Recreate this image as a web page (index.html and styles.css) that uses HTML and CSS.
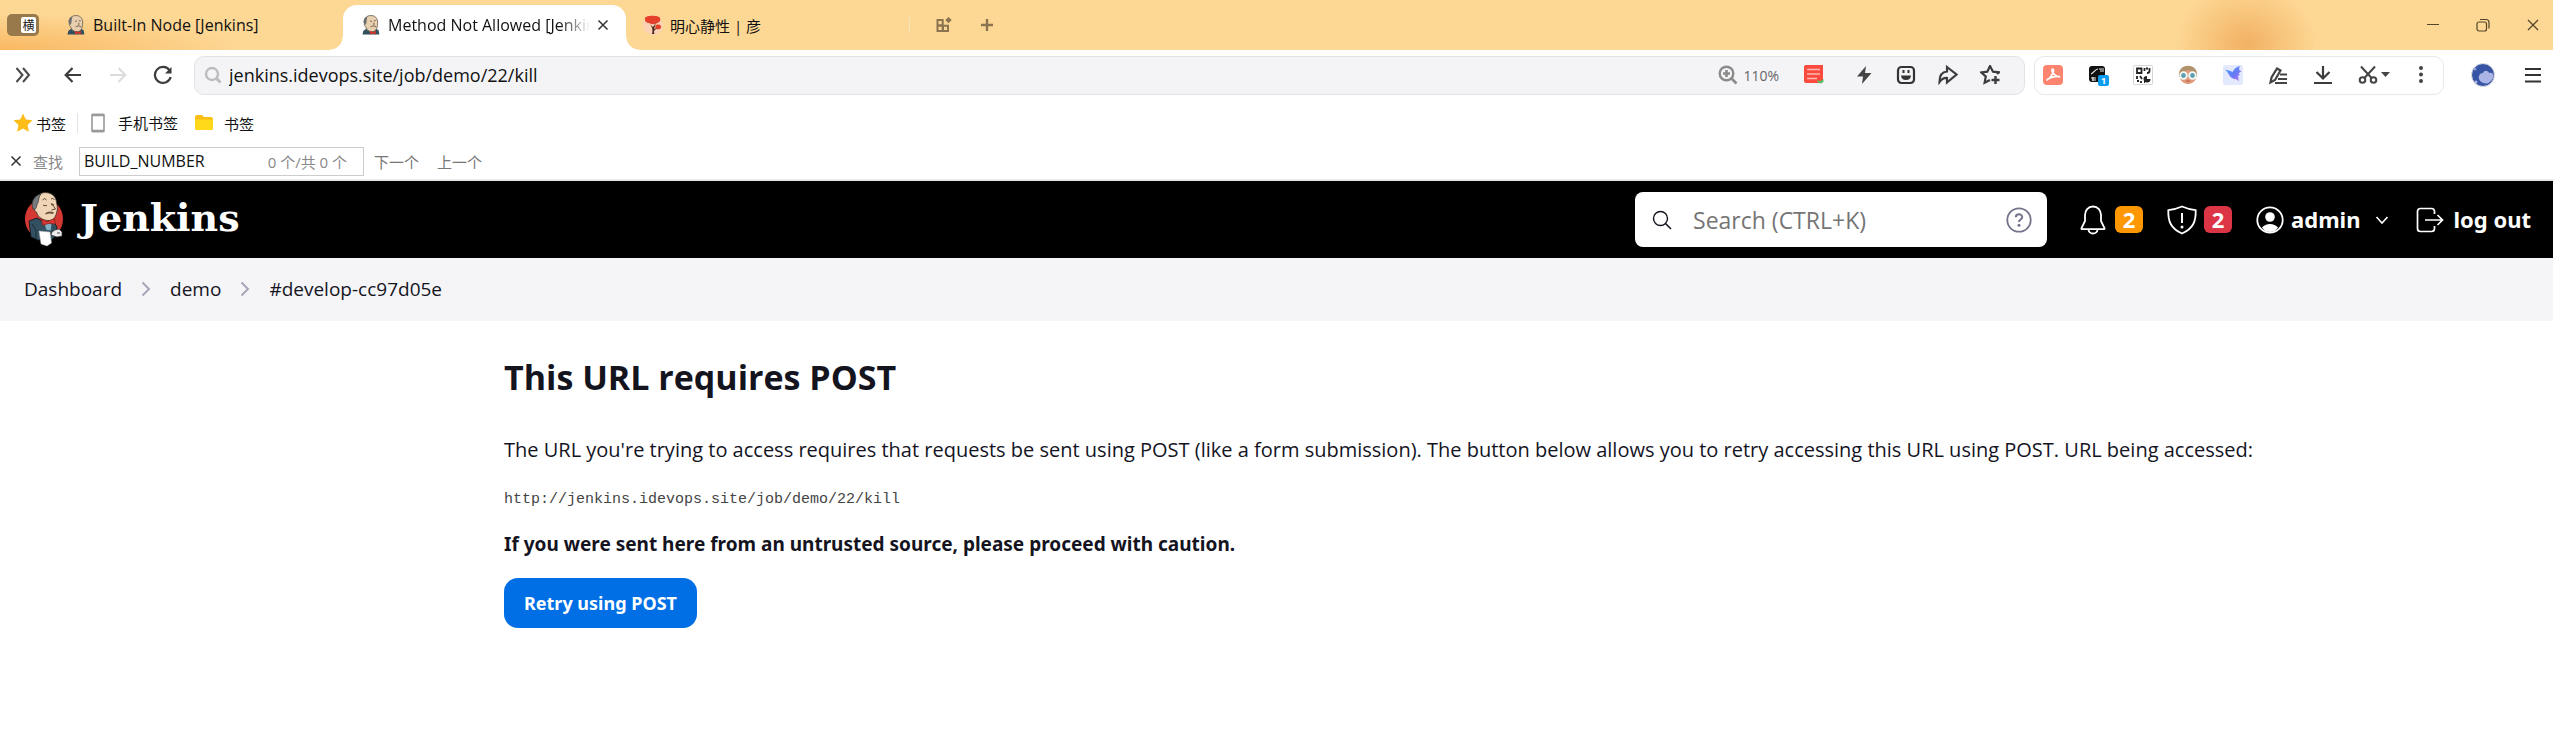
FILE: index.html
```html
<!DOCTYPE html>
<html lang="zh-CN">
<head>
<meta charset="utf-8">
<title>Method Not Allowed [Jenkins]</title>
<link rel="stylesheet" href="styles.css">
</head>
<body>
<svg class="defs" aria-hidden="true">
  <symbol id="butler" viewBox="0 0 20 21">
    <path d="M1 20.500l1-4 5-3.500h6l5 3 .8 4.500z" fill="#33505f"/>
    <path d="M3 9C2 4 5 1 9 .6c5-.4 8 2.400 8 7.400 0 4-1 9-5 9.500-4 .4-7-2-7.500-5C3.500 12 2.800 10.500 3 9z" fill="#e8d0ae" stroke="#5d554d" stroke-width=".8"/>
    <path d="M2.400 8C1.800 4.500 4 2 6.500 1.500 5 4 5.800 6.500 5 9l-1 1.500z" fill="#6b6e70"/>
    <path d="M9 6.500h2M13 6h2M9.500 12.500c2-1.500 4-1 6 0M13 8v3" fill="none" stroke="#6d5646" stroke-width=".9"/>
    <path d="M9 16.500l3 1.500 3-1.500v4l-3-1-3 1z" fill="#d8342b"/>
  </symbol>
</svg>

<div class="tabstrip">
  <button class="mode" aria-label="横"><span>横</span></button>
  <div class="tab tab-first">
    <svg class="i20"><use href="#butler"/></svg>
    <span class="tab-title">Built-In Node [Jenkins]</span>
  </div>
  <div class="tab tab-active">
    <svg class="i20"><use href="#butler"/></svg>
    <span class="tab-title fade">Method Not Allowed [Jenkins]</span>
    <button class="bare" aria-label="关闭标签"><svg class="i12" viewBox="0 0 12 12"><path d="M1.500 1.500l9 9M10.500 1.500l-9 9" stroke="#333" stroke-width="1.500"/></svg></button>
  </div>
  <div class="tab tab-third">
    <svg class="i20" viewBox="0 0 20 20"><circle cx="10" cy="10" r="10" fill="#fbd3b4"/><path d="M2 3c1-3 14-3 15 0 1 3-1 5-4 5.500-3 1.500-6 0-7.500-.5C3 8 1.500 5.500 2 3zM12.500 11c1-2 5-2 5.500.5s-2 3-4 2.700-2-2-1.500-3.200z" fill="#e5402b"/><path d="M9 19c1-3 .5-7-2-10l3 3 3-4-2 6 3-1-3 3 .3 3z" fill="#4b2a20"/></svg>
    <span class="tab-title">明心静性 | 彦</span>
  </div>
  <div class="newtab">
    <button class="bare" aria-label="标签组"><svg class="i16" viewBox="0 0 16 16"><path d="M1.500 3h5.200v5.200H1.500zM1.500 8.700h5.200v5.300H1.500zM7 8.700h5V14H7z" fill="none" stroke="#8a7550" stroke-width="2"/><path d="M12.500 0l3.200 3-3.200 3.200-3.200-3.200z" fill="#8a7550"/></svg></button>
    <button class="bare" aria-label="新标签页"><svg class="i16" viewBox="0 0 16 16"><path d="M8 2v12M2 8h12" stroke="#8a7550" stroke-width="2.400"/></svg></button>
  </div>
  <div class="winctl">
    <button class="bare" aria-label="最小化"><svg class="i14" viewBox="0 0 14 14"><path d="M1 6.500h12" stroke="#54452b"/></svg></button>
    <button class="bare" aria-label="还原"><svg class="i14" viewBox="0 0 14 14"><rect x="1" y="4" width="9.500" height="9" rx="2" fill="none" stroke="#54452b" stroke-width="1.200"/><path d="M4 1.500h6a3 3 0 0 1 3 3v6" fill="none" stroke="#54452b" stroke-width="1.200"/></svg></button>
    <button class="bare" aria-label="关闭"><svg class="i14" viewBox="0 0 14 14"><path d="M2 2l10 10M12 2L2 12" stroke="#54452b" stroke-width="1.300"/></svg></button>
  </div>
</div>

<div class="toolbar">
  <div class="nav">
    <button class="bare" aria-label="展开"><svg class="i20" viewBox="0 0 20 20"><path d="M3.500 3l6 7-6 7M10 3l6 7-6 7" fill="none" stroke="#4a4a4a" stroke-width="2"/></svg></button>
    <button class="bare" aria-label="后退"><svg class="i20" viewBox="0 0 20 20"><path d="M18 10H3M9.500 3L2.700 10l6.800 7" fill="none" stroke="#3c3c3c" stroke-width="2.200"/></svg></button>
    <button class="bare" aria-label="前进"><svg class="i20" viewBox="0 0 20 20"><path d="M2 10h15M10.500 3l6.800 7-6.800 7" fill="none" stroke="#dcdcdc" stroke-width="2"/></svg></button>
    <button class="bare" aria-label="刷新"><svg class="i20" viewBox="0 0 20 20"><path d="M17.700 12a8 8 0 1 1-1.200-6.700" fill="none" stroke="#3c3c3c" stroke-width="2.200"/><path d="M18.500 2v6.500H12z" fill="#3c3c3c"/></svg></button>
  </div>
  <div class="address">
    <svg class="i18" viewBox="0 0 18 18"><circle cx="8" cy="8" r="6" fill="none" stroke="#bcbcbf" stroke-width="2.400"/><path d="M12.500 12.500l4 4" stroke="#bcbcbf" stroke-width="3"/></svg>
    <input class="url" aria-label="地址" value="jenkins.idevops.site/job/demo/22/kill">
    <div class="zoom">
      <svg class="i20" viewBox="0 0 20 20"><circle cx="8.500" cy="8.500" r="6.800" fill="none" stroke="#8b8b8b" stroke-width="2.400"/><path d="M13.500 13.500l5 5M5 8.500h7M8.500 5v7" stroke="#8b8b8b" stroke-width="2.600"/></svg>
      <span>110%</span>
    </div>
    <div class="actions">
      <button class="bare note" aria-label="笔记"><svg class="i20" viewBox="0 0 20 20"><path d="M0 1.500Q0 0 2 0h17v15l-2 3H2q-2 0-2-2z" fill="#fb4a3e"/><path d="M3 4.500h13M3 9h13M3 13.500h10" stroke="#ffb9b2" stroke-width="1.500"/><path d="M13.500 14.500l2 2 4-2.500v2.500q-1 2-3 2t-3-2z" fill="#5abf62"/></svg></button>
      <button class="bare" aria-label="闪电"><svg class="i20" viewBox="0 0 20 20"><path d="M12 1L3 11.500h6L8 19l9.500-11H11z" fill="#444"/></svg></button>
      <button class="bare" aria-label="表情"><svg class="i20" viewBox="0 0 20 20"><rect x="2" y="2" width="16" height="16" rx="3.500" fill="none" stroke="#333" stroke-width="2.200"/><path d="M7.500 5v3M12.500 5v3" stroke="#333" stroke-width="2"/><path d="M5 10.500h10q-.5 4.500-5 4.500t-5-4.500z" fill="#333"/></svg></button>
      <button class="bare" aria-label="分享"><svg class="i20" viewBox="0 0 20 20"><path d="M9 2l9.500 7.500L9 17.500v-4.500c-3-.3-5 .5-7.500 4C1.500 11 4 6.800 9 6.500z" fill="none" stroke="#3c3c3c" stroke-width="2.200"/></svg></button>
      <button class="bare" aria-label="收藏"><svg class="i20" viewBox="0 0 20 20"><path d="M17 9l2-1.700-6-.6L10 1 7.300 6.700l-6 .8 4.500 4-1.200 6.300L10 15" fill="none" stroke="#3c3c3c" stroke-width="2.200"/><path d="M15.500 11v8M11.500 15h8" stroke="#3c3c3c" stroke-width="2.400"/></svg></button>
    </div>
  </div>
  <div class="extensions">
    <button class="bare" aria-label="PDF"><svg class="i20" viewBox="0 0 20 20"><rect width="20" height="20" rx="4" fill="#fd8570"/><path d="M9.500 4c3 0-.5 8-5.500 11M9.500 4c-2 1 1 7 7 8M5 14c3-2 7-3 11.500-2.500" fill="none" stroke="#fff" stroke-width="1.600" stroke-linecap="round"/></svg></button>
    <button class="bare badge-host" aria-label="脚本"><svg class="i20" viewBox="0 0 20 20"><rect x="1" y="1" width="16" height="16" rx="3" fill="#111"/><path d="M3 9c3-1 4-5 7-5M11 4h5M12 6h4M3 13h5M4 15h4M5 12v4" stroke="#e8e8e8" stroke-width="1.200" fill="none"/></svg><span class="count">1</span></button>
    <button class="bare" aria-label="二维码"><svg class="i20" viewBox="0 0 20 20"><rect x=".5" y=".5" width="19" height="19" rx="1" fill="#fff" stroke="#d5d5d5"/><path d="M4 3.500h4.500V8H4zM11.500 3v3M16.500 3v3q0 2-2.500 2M13 3.500h2M4 11v3M4 16h2M7 11l2 3M8 16v2M11 17h1" fill="none" stroke="#222" stroke-width="1.800"/><path d="M14 11v3h3.500a3.500 3.200 0 1 1-3.500-3z" fill="#222"/></svg></button>
    <button class="bare" aria-label="头像"><svg class="i20" viewBox="0 0 20 20"><path d="M1 12C0 5 4 .8 10 .8S20 5 19 12z" fill="#b2926b"/><path d="M2 12q3-6 9-7 5 2 7 7c0 4-4 7-8 7s-8-3-8-7z" fill="#e09a78"/><circle cx="5.500" cy="10.500" r="3.300" fill="#5f9fb2" stroke="#f2fafa" stroke-width="1.800"/><circle cx="14.500" cy="10.500" r="3.300" fill="#5f9fb2" stroke="#f2fafa" stroke-width="1.800"/><path d="M8 16h4" stroke="#b65d48"/></svg></button>
    <button class="bare" aria-label="飞鸟"><svg class="i20" viewBox="0 0 20 20"><defs><linearGradient id="bird" x2="1" y2="1"><stop stop-color="#4aa5ff"/><stop offset=".6" stop-color="#6b77f5"/><stop offset="1" stop-color="#e17af5"/></linearGradient></defs><rect width="20" height="20" rx="2" fill="#e3e9fc"/><path d="M2 4.500c3 .5 5 1 7.500 2.500C11 4 13 2 17 1c-1 2-1 3-.5 4.500l2 .5-3 2.500 1.500 1.500-2 .8 1 5.700c-2-2.500-4-2.300-6-3C6 12 6 8 2 4.500z" fill="url(#bird)"/></svg></button>
    <button class="bare" aria-label="批注"><svg class="i20" viewBox="0 0 20 20"><path d="M2.500 17.500l1-5L9 3.500l3.500 2L7 15z" fill="none" stroke="#444" stroke-width="2.200"/><path d="M12 9.500h7M10 14h9M7 18h12" stroke="#444" stroke-width="2.200"/></svg></button>
    <button class="bare" aria-label="下载"><svg class="i20" viewBox="0 0 20 20"><path d="M10 1v12M3.500 7l6.500 6.500L16.500 7M1 18h18" fill="none" stroke="#3c3c3c" stroke-width="2.200"/></svg></button>
    <button class="bare" aria-label="截图"><svg class="scissors" viewBox="0 0 32 20"><path d="M3 1.500l11 12M17 1.500l-11 12" stroke="#444" stroke-width="2"/><circle cx="4.500" cy="15" r="2.800" fill="none" stroke="#444" stroke-width="2"/><circle cx="15.500" cy="15" r="2.800" fill="none" stroke="#444" stroke-width="2"/><path d="M23 7h9l-4.500 5z" fill="#444"/></svg></button>
    <button class="bare more" aria-label="更多"><svg class="i20" viewBox="0 0 20 20"><circle cx="10" cy="3" r="2" fill="#444"/><circle cx="10" cy="9.500" r="2" fill="#444"/><circle cx="10" cy="16" r="2" fill="#444"/></svg></button>
  </div>
  <div class="account">
    <button class="bare" aria-label="用户"><svg class="i24" viewBox="0 0 24 24"><circle cx="12" cy="12" r="11.500" fill="#3854a4" stroke="#e3e3e3"/><path d="M8 16c-1-3 1-6 4-6 1-3 5-3 6 0 3-1 5 1 4.500 4-1 3-3 5-6 6.500-4 0-7-1-8.500-4.500z" fill="#aab5e6"/><circle cx="5" cy="19" r="1.500" fill="#a9b7e8"/><circle cx="4" cy="6" r="1.500" fill="#8f9edb"/></svg></button>
    <button class="bare" aria-label="菜单"><svg class="i20" viewBox="0 0 20 20"><path d="M2 4h16M2 10h16M2 16.500h16" stroke="#333" stroke-width="2.200"/></svg></button>
  </div>
</div>

<div class="bookmarks">
  <a class="bm" href="#"><svg class="i20" viewBox="0 0 20 20"><path d="M10 .5l2.800 6 6.700.8-5 4.600 1.400 6.800L10 15.500l-5.900 3.200 1.400-6.800-5-4.600 6.700-.8z" fill="#fdbc16"/></svg>书签</a>
  <a class="bm bm-phone" href="#"><svg class="i20" viewBox="0 0 20 20"><rect x="4" y="1.500" width="12" height="17" rx=".5" fill="#fff" stroke="#999" stroke-width="1.600"/><path d="M4 2h12M4 18h12" stroke="#999" stroke-width="2.500"/></svg>手机书签</a>
  <a class="bm bm-folder" href="#"><svg class="i20" viewBox="0 0 20 20"><path d="M1 4q0-2 2-2h5l2 2h7q2 0 2 2v9q0 2-2 2H3q-2 0-2-2z" fill="#fdbe14"/><path d="M1 6.500h18V15q0 2-2 2H3q-2 0-2-2z" fill="#ffd91a"/></svg>书签</a>
</div>

<div class="findbar">
  <button class="bare" aria-label="关闭查找"><svg class="i12" viewBox="0 0 12 12"><path d="M1.500 1.500l9 9M10.500 1.500l-9 9" stroke="#333" stroke-width="1.500"/></svg></button>
  <label for="find">查找</label>
  <div class="findbox">
    <input id="find" value="BUILD_NUMBER">
    <span>0 个/共 0 个</span>
  </div>
  <button class="bare findlink">下一个</button>
  <button class="bare findlink">上一个</button>
</div>

<header class="header">
  <a class="brand" href="#">
    <svg class="logo" viewBox="0 0 39 55">
      <ellipse cx="20" cy="27" rx="19" ry="20" fill="#d33833"/>
      <path d="M5 29l8-3 7 4h10l3 5-2 10-5 4-12-1-7-3z" fill="#335061" stroke="#0b1216" stroke-width=".8"/>
      <path d="M20 31l8 0-1 8-5-1z" fill="#81b0c4" stroke="#24404f" stroke-width=".6"/>
      <path d="M12 8C13 3 17 .6 21.500.6 28 .6 32 5 32.500 10c.3 3 1.500 6 .5 9-1 5-3 9-7 9.500C20 29 14 26 12.500 20 10 19 9 16 9.500 14z" fill="#f0d6b7" stroke="#39322b" stroke-width=".8"/>
      <path d="M9 17C6.500 10 10 3.500 17 2c-2.500 3-2 6-3 8.500-.5 2-1.500 2.500-1.500 4.500L11 17.500z" fill="#777b7d" stroke="#333" stroke-width=".7"/>
      <path d="M18.500 8q2-3 4 0M27 7q2-2 3.500 1M19 13q2 1.500 4 .3M27 12.500q2 1 3 0M27.500 11l4 6-4 1" fill="none" stroke="#4d3a2d" stroke-width=".9"/>
      <path d="M21 21.500q4-3.500 9-1l-1 1.500q-4-1-7 .5z" fill="#6b5140"/>
      <path d="M17.500 27l6 2.500 7-3 1 5.500-7-.5-6 2z" fill="#d33833" stroke="#7b1a17" stroke-width=".6"/>
      <path d="M15 39l11 1 1.500 11-4.500 3-6-2z" fill="#fff" stroke="#aaa" stroke-width=".5"/>
      <path d="M31 38l4-1 3 3v4l-5 1-6-2 1-3z" fill="#eee" stroke="#333" stroke-width=".7"/>
      <path d="M33 41h3M8 32l4 6v8" fill="none" stroke="#15212a" stroke-width=".8"/>
    </svg>
    <span>Jenkins</span>
  </a>
  <form class="search">
    <svg class="i20" viewBox="0 0 20 20"><circle cx="8.500" cy="8.500" r="7" fill="none" stroke="#14141f" stroke-width="1.400"/><path d="M13.500 13.500l5.500 5.500" stroke="#14141f" stroke-width="1.600"/></svg>
    <input aria-label="Search" placeholder="Search (CTRL+K)">
    <a href="#" aria-label="Help"><svg class="i26" viewBox="0 0 26 26"><circle cx="13" cy="13" r="11.700" fill="none" stroke="#73738c" stroke-width="1.800"/><path d="M9.800 10.300c0-4 6.400-4 6.400-.3 0 2.500-3.200 2.500-3.200 5" fill="none" stroke="#73738c" stroke-width="2"/><circle cx="13" cy="18.200" r="1.500" fill="#73738c"/></svg></a>
  </form>
  <a class="hitem" href="#"><svg class="i30" viewBox="0 0 30 30"><path d="M15 1.500c-5 0-8 4-8 8.500v6L3.500 23q-.5 1.200 1 1.200h21q1.500 0 1-1.200L23 16v-6c0-4.500-3-8.500-8-8.500zM10.500 24.500a4.500 4 0 0 0 9 0" fill="none" stroke="#fff" stroke-width="1.800"/></svg><span class="pill amber">2</span></a>
  <a class="hitem" href="#"><svg class="i30" viewBox="0 0 30 30"><path d="M15 1.500Q8 4.500 1.300 5.200C1 16 3.500 23.500 15 28.500 26.500 23.500 29 16 28.700 5.200 22 4.500 15 1.500 15 1.500z" fill="none" stroke="#fff" stroke-width="1.800"/><path d="M15 8v10" stroke="#fff" stroke-width="2"/><circle cx="15" cy="22" r="1.500" fill="#fff"/></svg><span class="pill red">2</span></a>
  <a class="hitem user" href="#"><svg class="i28" viewBox="0 0 28 28"><circle cx="14" cy="14" r="12.700" fill="none" stroke="#fff" stroke-width="1.800"/><circle cx="14" cy="11" r="4.800" fill="#fff"/><path d="M6 21.500q3-3.500 8-3.500t8 3.500Q19 26 14 26t-8-4.500z" fill="#fff"/></svg>admin<svg class="i14 caret" viewBox="0 0 14 14"><path d="M1.500 4L7 10l5.500-6" fill="none" stroke="#fff" stroke-width="1.600"/></svg></a>
  <a class="hitem" href="#"><svg class="i28" viewBox="0 0 28 28"><path d="M18.500 8V5.500q0-3-3-3h-11q-3 0-3 3v17q0 3 3 3h11q3 0 3-3V20M9 14h17M21.500 9l5 5-5 5" fill="none" stroke="#fff" stroke-width="1.700"/></svg>log out</a>
</header>

<nav class="crumbs">
  <a href="#">Dashboard</a>
  <svg class="chev" viewBox="0 0 10 16"><path d="M1.500 1.500L8 8l-6.500 6.500" fill="none" stroke="#a6a6b8" stroke-width="2"/></svg>
  <a href="#">demo</a>
  <svg class="chev" viewBox="0 0 10 16"><path d="M1.500 1.500L8 8l-6.500 6.500" fill="none" stroke="#a6a6b8" stroke-width="2"/></svg>
  <a href="#">#develop-cc97d05e</a>
</nav>

<main class="main">
  <h1>This URL requires POST</h1>
  <p>The URL you're trying to access requires that requests be sent using POST (like a form submission). The button below allows you to retry accessing this URL using POST. URL being accessed:</p>
  <pre>http://jenkins.idevops.site/job/demo/22/kill</pre>
  <p class="warn">If you were sent here from an untrusted source, please proceed with caution.</p>
  <button class="retry">Retry using POST</button>
</main>
</body>
</html>
```
FILE: styles.css
```css
* { box-sizing: border-box; }
body {
  margin: 0;
  background: #fff;
  color: #14141f;
  font-family: "Open Sans", "Noto Sans CJK SC", sans-serif;
  font-size: 19px;
}
a { color: inherit; text-decoration: none; }
svg { flex: none; display: block; }
input { font-family: inherit; border: 0; outline: 0; background: none; padding: 0; min-width: 0; }
.defs { position: absolute; width: 0; height: 0; }
.bare { border: 0; background: none; padding: 0; font-family: inherit; color: inherit; flex: none; display: block; }
.i12 { width: 12px; height: 12px; }
.i14 { width: 14px; height: 14px; }
.i16 { width: 16px; height: 16px; }
.i18 { width: 18px; height: 18px; }
.i20 { width: 20px; height: 20px; }
.i24 { width: 24px; height: 24px; }
.i26 { width: 26px; height: 26px; }
.i28 { width: 28px; height: 28px; }
.i30 { width: 30px; height: 30px; }

.tabstrip {
  display: flex;
  align-items: center;
  height: 50px;
  padding: 0 13px 0 7px;
  color: #111;
  font-size: 16px;
  background:
    radial-gradient(ellipse 70px 60px at 88% 44px, #f2b163, #f2b16300),
    radial-gradient(ellipse 240px 36px at 0 50px, #f9b862, #f9b86200),
    #fdd794;
}
.mode {
  display: flex;
  justify-content: flex-end;
  width: 32px;
  height: 22px;
  padding: 3px;
  border: 0;
  border-radius: 5px;
  background: #97794b;
}
.mode span { width: 15px; height: 16px; border-radius: 2px; background: #fff; font: 12px/15px "Noto Sans CJK SC", sans-serif; color: #222; }
.tab { display: flex; align-items: center; gap: 7px; height: 100%; }
.tab-first { width: 304px; padding-left: 27px; }
.tab-active {
  position: relative;
  align-self: flex-end;
  width: 283px;
  height: 45px;
  padding: 0 17px 5px 18px;
  border-radius: 14px 14px 0 0;
  background: #fff;
}
.tab-active::before, .tab-active::after { content: ""; position: absolute; bottom: 0; width: 13px; height: 13px; }
.tab-active::before { right: 100%; background: radial-gradient(circle at 0 0, #fff0 12px, #fff 13px); }
.tab-active::after { left: 100%; background: radial-gradient(circle at 100% 0, #fff0 12px, #fff 13px); }
.tab-title { white-space: nowrap; overflow: hidden; }
.fade { flex: 1; mask-image: linear-gradient(to right, #000 85%, transparent); }
.tab-third { width: 283px; padding-left: 17px; font-size: 15px; }
.newtab { display: flex; gap: 27px; padding-left: 26px; border-left: 1px solid #f8e5bf; }
.winctl { display: flex; gap: 36px; margin-left: auto; }

.toolbar { display: flex; align-items: center; height: 50px; padding: 0 10px 0 13px; }
.nav { display: flex; gap: 25px; width: 181px; }
.nav .bare:first-child { margin-right: 5px; }
.address {
  display: flex;
  align-items: center;
  flex: 1;
  height: 39px;
  padding: 0 24px 0 9px;
  border: 1px solid #e3e3e6;
  border-radius: 10px;
  background: #f4f4f7;
}
.url { flex: 1; margin-left: 7px; font-size: 18px; color: #111; }
.zoom { display: flex; align-items: center; gap: 5px; font-size: 14px; color: #666; margin-right: 25px; }
.actions { display: flex; gap: 22px; }
.note { margin-right: 8px; }
.extensions { display: flex; align-items: center; gap: 25px; height: 39px; margin-left: 9px; padding: 0 12px 0 8px; border: 1px solid #e8e8ea; border-radius: 10px; }
.badge-host { position: relative; }
.count { position: absolute; right: -1px; bottom: -1px; width: 11px; height: 11px; background: #0c9cf0; border-radius: 2px; color: #fff; font: bold 9px/11px "Open Sans", sans-serif; text-align: center; }
.scissors { width: 32px; height: 20px; }
.more { margin-left: -4px; }
.account { display: flex; align-items: center; gap: 28px; margin-left: 27px; }

.bookmarks { display: flex; align-items: center; height: 46px; padding-left: 13px; font-size: 15px; color: #111; }
.bm { display: flex; align-items: center; gap: 3px; }
.bm-phone { gap: 10px; margin-left: 11px; padding-left: 10px; border-left: 1px solid #e3e3e3; line-height: 16px; }
.bm-folder { gap: 10px; margin-left: 16px; }

.findbar { display: flex; align-items: center; height: 35px; padding: 0 0 3px 10px; border-bottom: 2px solid #e6e9e9; font-size: 15px; color: #888; }
.findbar label { margin: 0 16px 0 11px; }
.findbox { display: flex; align-items: center; justify-content: space-between; width: 285px; height: 29px; padding: 0 16px 0 4px; border: 1px solid #ccc; }
.findbox input { width: 150px; font-size: 16px; color: #111; }
.findlink { margin-left: 10px; font-size: 15px; color: #777; }
.findlink + .findlink { margin-left: 18px; }

.header { display: flex; align-items: center; height: 77px; padding: 0 22px 0 24px; background: #000; color: #fff; }
.brand { display: flex; align-items: center; gap: 17px; margin-right: auto; font: bold 38px/48px "DejaVu Serif", serif; }
.brand span { padding-bottom: 4px; }
.logo { width: 39px; height: 55px; }
.search { display: flex; align-items: center; width: 412px; height: 55px; margin: 0 31px 0 0; padding: 0 15px 0 17px; border-radius: 8px; background: #fff; }
.search input { flex: 1; margin-left: 21px; font-size: 23px; }
.search input::placeholder { color: #757575; }
.hitem { display: flex; align-items: center; gap: 7px; margin-right: 24px; font: 700 22px/27px "Noto Sans", sans-serif; white-space: nowrap; }
.user { margin-right: 27px; }
.hitem:last-child { gap: 9px; margin-right: 0; }
.pill { width: 28px; height: 27px; border-radius: 6px; line-height: 26px; text-align: center; }
.amber { background: #ff9800; }
.red { background: #dc3545; }
.caret { margin-left: 8px; }

.crumbs { display: flex; align-items: center; gap: 19px; height: 63px; padding: 0 24px 2px; background: #f5f5f8; }
.chev { width: 10px; height: 16px; }

.main { padding: 31px 24px 120px 504px; }
h1 { margin: 0 0 32px; font-size: 34px; line-height: 50px; }
p { margin: 0; font-size: 20px; line-height: 32px; }
pre { margin: 18px 0 12px; font: 15px/32px "Liberation Mono", monospace; color: #444; }
.warn { margin-bottom: 18px; font-family: "Noto Sans", sans-serif; font-size: 19px; font-weight: 700; }
.retry { height: 50px; padding: 0 20px; border: 0; border-radius: 14px; background: #006fe6; color: #fff; font: 700 18px "Noto Sans", sans-serif; }
```
